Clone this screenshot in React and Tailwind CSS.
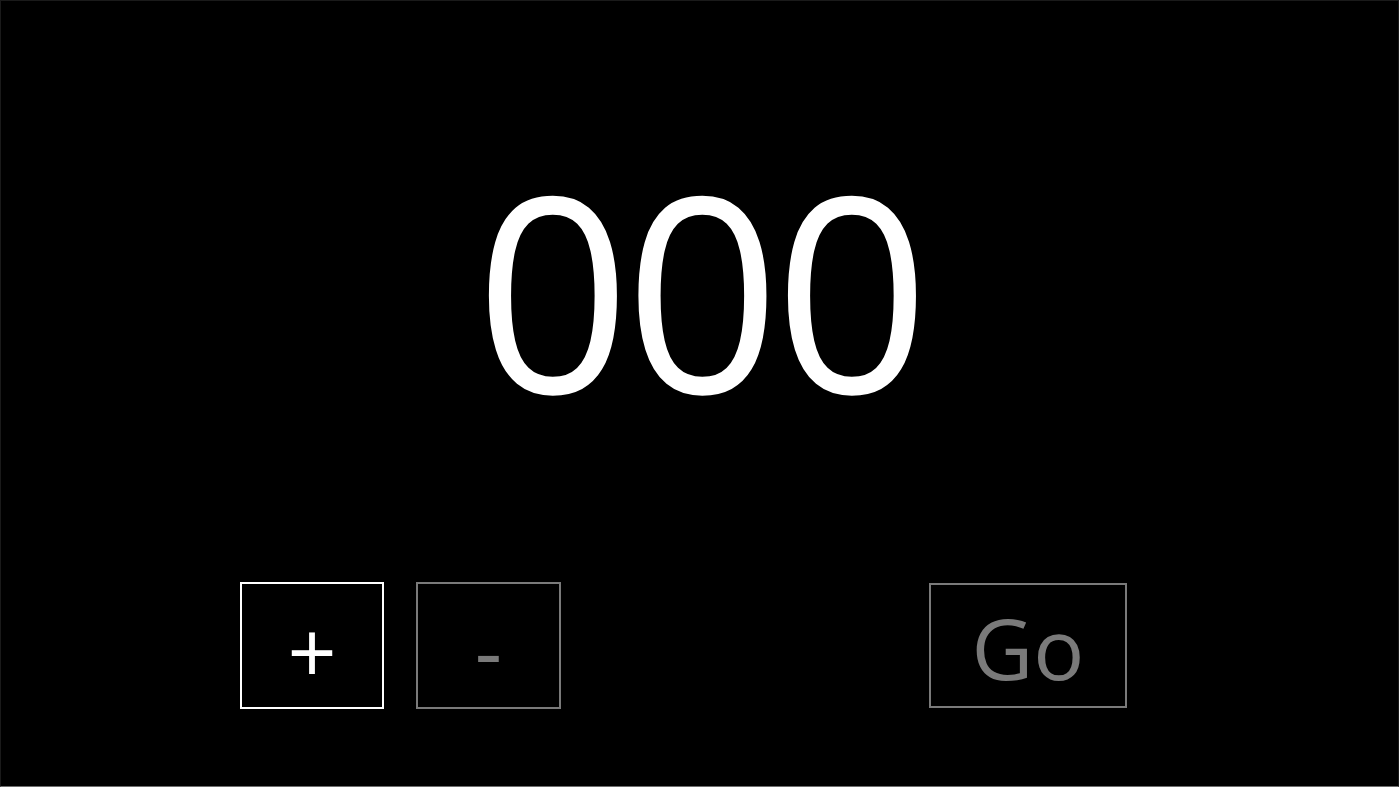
export default function App() {
  return (
    <div
      className="w-[1399px] h-[787px] bg-black border-t border-x border-[#1a1a1a] border-b-[#6e6e6e] border-b flex flex-col overflow-hidden"
      style={{ fontFamily: '"Open Sans", "Noto Sans", sans-serif' }}
    >
      <div className="mt-[151px] flex justify-center">
        <div className="text-white text-[272px] leading-none tracking-[-6px]">000</div>
      </div>
      <div className="mt-[158px] flex items-start pl-[239px]">
        <button className="w-[144px] h-[127px] border-2 border-white flex items-center justify-center text-white text-[86px] leading-none pt-[10px]">
          +
        </button>
        <button className="ml-[32px] w-[145px] h-[127px] border-2 border-[#7a7a7a] flex items-center justify-center text-[#7a7a7a] text-[85px] leading-none pt-[8px]">
          -
        </button>
        <button className="ml-[368px] mt-[1px] w-[198px] h-[125px] border-2 border-[#7a7a7a] flex items-center justify-center text-[#7a7a7a] text-[85px] leading-none pt-[4px]">
          Go
        </button>
      </div>
    </div>
  );
}
